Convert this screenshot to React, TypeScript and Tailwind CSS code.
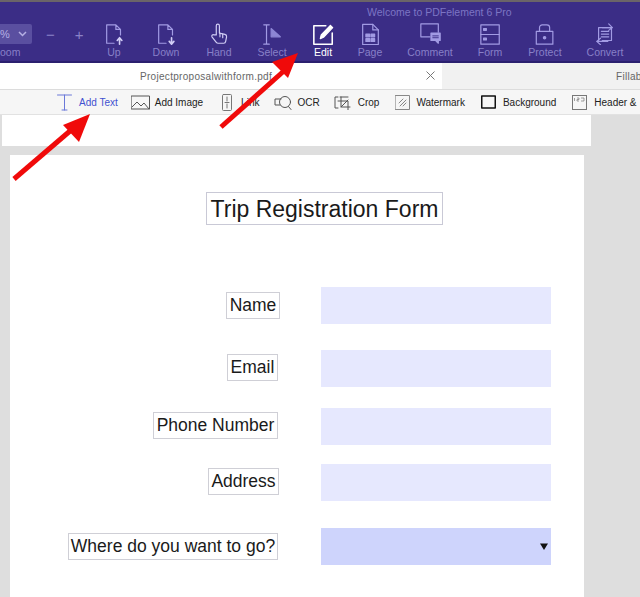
const font = { fontFamily: '"Liberation Sans", Arial, sans-serif' };

function Ic({ children, w = 24, h = 24, c = "#a29be4", s = 1 }: { children: React.ReactNode; w?: number; h?: number; c?: string; s?: number }) {
  return (
    <svg width={w * s} height={h * s} viewBox={`0 0 ${w} ${h}`} fill="none" stroke={c} strokeWidth={1.3} strokeLinejoin="round" strokeLinecap="round">
      {children}
    </svg>
  );
}

const S = 0.92;
const navItems: { label: string; w: string; active?: boolean; icon: React.ReactNode }[] = [
  {
    label: "Up", w: "w-[52px]",
    icon: <Ic s={S}><path d="M4 2h10l5 5v6M14 2v5h5M12 22H4V2" /><path d="M18 23v-6M15.500 19l2.500-3 2.500 3" strokeWidth={1.8} stroke="#d0ccf4" /></Ic>,
  },
  {
    label: "Down", w: "w-[52px]",
    icon: <Ic s={S}><path d="M4 2h10l5 5v6M14 2v5h5M12 22H4V2" /><path d="M18 16v6M15.500 20l2.500 3 2.500-3" strokeWidth={1.8} stroke="#d0ccf4" /></Ic>,
  },
  {
    label: "Hand", w: "w-[54px]",
    icon: <Ic s={S} c="#d0ccf4"><path d="M9 13V3a1.700 1.700 0 0 1 3.400 0v8l6 1.400c1.400.4 2 1.300 1.800 2.600l-1 5c-.2 1.300-1 2-2 2H11c-1 0-1.600-.4-2.200-1.200L4.300 15c-.8-1.500 1-3 2.400-2z" /><path d="M13 11v4M16 12v4" /></Ic>,
  },
  {
    label: "Select", w: "w-[52px]",
    icon: <Ic s={S}><path d="M3 2h6M3 23h6M6 2v21" /><path d="M11 6l10 9H11z" fill="#8d86d4" stroke="#8d86d4" /></Ic>,
  },
  {
    label: "Edit", w: "w-[50px]", active: true,
    icon: <Ic s={S} c="#ffffff"><path d="M15 3H2v20h20V11" strokeWidth={1.700} /><path d="M9 17l1-4L20 2.500l2.500 2.500L12.500 15.500z" fill="#fff" /></Ic>,
  },
  {
    label: "Page", w: "w-[44px]",
    icon: <Ic s={S}><path d="M4 1.500h11l6 6v16H4z" /><path d="M15 1.500v6h6" /><rect x="7.500" y="12" width="4" height="3" fill="#a29be4" /><rect x="13" y="12" width="4" height="3" fill="#a29be4" /><rect x="7.500" y="17" width="4" height="3" fill="#a29be4" /><rect x="13" y="17" width="4" height="3" fill="#a29be4" /></Ic>,
  },
  {
    label: "Comment", w: "w-[76px]",
    icon: <Ic s={S}><path d="M12 15H2V1h19v9" /><path d="M13 11h10v8h-2v3l-3-3h-5z" fill="#a29be4" /><path d="M15 14h6M15 16h6" stroke="#3b2d86" strokeWidth={1} /></Ic>,
  },
  {
    label: "Form", w: "w-[44px]",
    icon: <Ic s={S}><rect x="2" y="2" width="20" height="21" /><path d="M2 12.500h20" /><rect x="5" y="6" width="3" height="2" fill="#a29be4" /><rect x="5" y="16.500" width="3" height="2" fill="#a29be4" /></Ic>,
  },
  {
    label: "Protect", w: "w-[66px]",
    icon: <Ic s={S}><rect x="2.500" y="9" width="18" height="14" /><path d="M6 9V5a3 3 0 0 1 3-3h5a3 3 0 0 1 3 3v4" /><circle cx="11.500" cy="16" r="1.300" fill="#a29be4" /></Ic>,
  },
  {
    label: "Convert", w: "w-[54px]",
    icon: <Ic s={S}><path d="M5 19V5h14v14H9" /><path d="M8 9h8M8 12h8M8 15h8" /><path d="M9 5h11M16 1l4 4-4 3M15 20H3M7 16.500l-4 3.500 4 3.500" /></Ic>,
  },
];

const K = "#555";
const toolItems: { label: string; ml: string; gap: string; blue?: boolean; icon: React.ReactNode }[] = [
  {
    label: "Add Text", ml: "ml-[57px]", gap: "gap-[7px]", blue: true,
    icon: <Ic w={15} h={17} c="#6a78d8"><path d="M0.500 1h14M7.500 1v15M5 16h5" strokeWidth={1} /></Ic>,
  },
  {
    label: "Add Image", ml: "ml-[13px]", gap: "gap-[5px]",
    icon: <Ic w={19} h={15} c={K}><rect x="0.500" y="1" width="18" height="13" strokeWidth={1} /><path d="M1 12l5-5 4 4 3-3 5 6" strokeWidth={1} /></Ic>,
  },
  {
    label: "Link", ml: "ml-[19px]", gap: "gap-[9px]",
    icon: <Ic w={10} h={17} c="#777"><rect x="0.500" y="0.500" width="9" height="16" rx="1" strokeWidth={1} /><path d="M5 3v4M5 10v4M3 8.500h4" strokeWidth={1} /></Ic>,
  },
  {
    label: "OCR", ml: "ml-[15px]", gap: "gap-[5px]",
    icon: <Ic w={18} h={15} c={K}><path d="M7 4H1v6h5" strokeWidth={1} /><circle cx="11" cy="7" r="5.500" strokeWidth={1} /><path d="M14.500 11.500l2.500 3" strokeWidth={1} /></Ic>,
  },
  {
    label: "Crop", ml: "ml-[14px]", gap: "gap-[6px]",
    icon: <Ic w={18} h={15} c={K}><path d="M4 2H1v11h3M6 2h8" strokeWidth={1} /><path d="M7 2v10h9M4 6h10v9M7 12l7-7" strokeWidth={1} /></Ic>,
  },
  {
    label: "Watermark", ml: "ml-[16px]", gap: "gap-[6px]",
    icon: <Ic w={15} h={15} c={K}><rect x="0.500" y="0.500" width="14" height="14" strokeWidth={1} stroke="#888" /><path d="M4 8l4-4M5 11l6-6M8 11l3-3" strokeWidth={1} stroke="#888" /></Ic>,
  },
  {
    label: "Background", ml: "ml-[16px]", gap: "gap-[7px]",
    icon: <Ic w={15} h={14} c="#111"><rect x="0.750" y="1" width="13.500" height="12" strokeWidth={1.500} /></Ic>,
  },
  {
    label: "Header &", ml: "ml-[16px]", gap: "gap-[7px]",
    icon: (
      <svg width="15" height="15" viewBox="0 0 15 15" fill="none" stroke="#777" strokeWidth="1">
        <rect x="0.500" y="0.500" width="14" height="14" />
        <path d="M2.500 3v3M5 3h2v1.500H5V6h2M9 3h3v3H9" strokeWidth="0.700" />
      </svg>
    ),
  },
];

const rows = [
  { label: "Name", mt: "mt-[62px]", box: "mt-[5px] w-[54px]" },
  { label: "Email", mt: "mt-[26px]", box: "mt-[4px] mr-[2px] w-[51px]" },
  { label: "Phone Number", mt: "mt-[21px]", box: "mt-[4px] mr-[2px] w-[125px]" },
  { label: "Address", mt: "mt-[19px]", box: "mt-[4px] mr-[1px] w-[71px]" },
  { label: "Where do you want to go?", mt: "mt-[27px]", box: "mt-[5px] mr-[2px] w-[210px]", select: true },
];

export default function App() {
  return (
    <div style={font} className="relative h-[597px] w-[640px] overflow-hidden bg-[#dedede]">
      <div className="h-[2px] bg-[#6b6468]" />

      <header className="relative flex h-[61px] items-start border-b-2 border-[#2b206f] bg-[#3b2d86]">
        <p className="absolute left-[367px] top-[3px] whitespace-nowrap text-[10.500px] leading-[14px] text-[#7d75c4]">
          Welcome to PDFelement 6 Pro
        </p>
        <div className="flex w-[88px] shrink-0 flex-col overflow-hidden">
          <div className="mt-[22px] flex items-center">
            <div className="flex h-[20px] w-[32px] items-center justify-between rounded-r-[2px] bg-[#5a4fa0] pr-[5px] text-[11px] text-[#b6b0e4]">
              <span>%</span>
              <svg width="9" height="6" viewBox="0 0 9 6" fill="none" stroke="#b6b0e4" strokeWidth="1.500"><path d="M1 1l3.500 3.500L8 1" /></svg>
            </div>
            <span className="ml-[14px] text-[15px] leading-none text-[#8a82c8]">−</span>
            <span className="ml-[20px] text-[15px] leading-none text-[#8a82c8]">+</span>
          </div>
          <span className="mt-[1px] text-[10.500px] leading-[14px] text-[#8880c8]">oom</span>
        </div>
        <nav className="flex">
          {navItems.map((n) => (
            <div key={n.label} className={`${n.w} flex shrink-0 flex-col items-center pt-[21px]`}>
              {n.icon}
              <span className={`whitespace-nowrap text-[10.500px] leading-[14px] ${n.active ? "text-white" : "text-[#8880c8]"}`}>{n.label}</span>
            </div>
          ))}
        </nav>
      </header>

      <div className="flex h-[27px] border-b border-[#dcdcdc]">
        <div className="relative flex w-[442px] shrink-0 items-center bg-white pl-[140px] text-[10px] tracking-[0.3px] text-[#666]">
          Projectproposalwithform.pdf
          <svg className="absolute left-[426px] top-[8px]" width="9" height="9" viewBox="0 0 9 9" stroke="#777" strokeWidth="1"><path d="M0.500 0.500l8 8M8.500 0.500l-8 8" /></svg>
        </div>
        <div className="flex flex-1 items-center overflow-hidden whitespace-nowrap bg-[#f1f1f1] pl-[174px] text-[10px] tracking-[0.3px] text-[#666]">
          Fillab
        </div>
      </div>

      <div className="flex h-[25px] items-center overflow-hidden whitespace-nowrap border-b border-[#e2e2e2] bg-[#f6f6f6]">
        {toolItems.map((t) => (
          <div key={t.label} className={`${t.ml} ${t.gap} flex shrink-0 items-center`}>
            {t.icon}
            <span className={`text-[10px] ${t.blue ? "text-[#3f51d0]" : "text-[#222]"}`}>{t.label}</span>
          </div>
        ))}
      </div>

      <div className="ml-[2px] h-[31px] w-[589px] bg-white" />

      <main className="ml-[10px] mt-[9px] h-[460px] w-[574px] overflow-hidden bg-white pt-[37px]">
        <div className="ml-[196px] flex h-[33px] w-[237px] items-center justify-center whitespace-nowrap border border-[#c9c9d6] pt-[1px] text-[23px] leading-none text-[#1a1a1a]">
          Trip Registration Form
        </div>

        {rows.map((r) => (
          <div key={r.label} className={`${r.mt} flex h-[37px] items-start`}>
            <div className="flex w-[270px] justify-end">
              <div className={`${r.box} flex h-[27px] items-center justify-center whitespace-nowrap border border-[#cfcfd6] pt-[1px] text-[17.500px] leading-none text-[#1a1a1a]`}>{r.label}</div>
            </div>
            <div className={`ml-[41px] flex h-full w-[230px] items-center justify-end pr-[3px] ${r.select ? "bg-[#ced4fc]" : "bg-[#e6e8fe]"}`}>
              {r.select && <svg width="8" height="8" viewBox="0 0 8 8" fill="#111"><path d="M0 0.500h8L4 7z" /></svg>}
            </div>
          </div>
        ))}
      </main>

      <svg className="pointer-events-none absolute left-0 top-0" width="640" height="597" viewBox="0 0 640 597">
        <path d="M14 179L70 131" stroke="#f00a0a" strokeWidth="5" />
        <path d="M90 114L63 125L79 142z" fill="#f00a0a" />
        <path d="M221 127L285 70" stroke="#f00a0a" strokeWidth="5" />
        <path d="M298 53L272 62L288 78z" fill="#f00a0a" />
      </svg>
    </div>
  );
}
